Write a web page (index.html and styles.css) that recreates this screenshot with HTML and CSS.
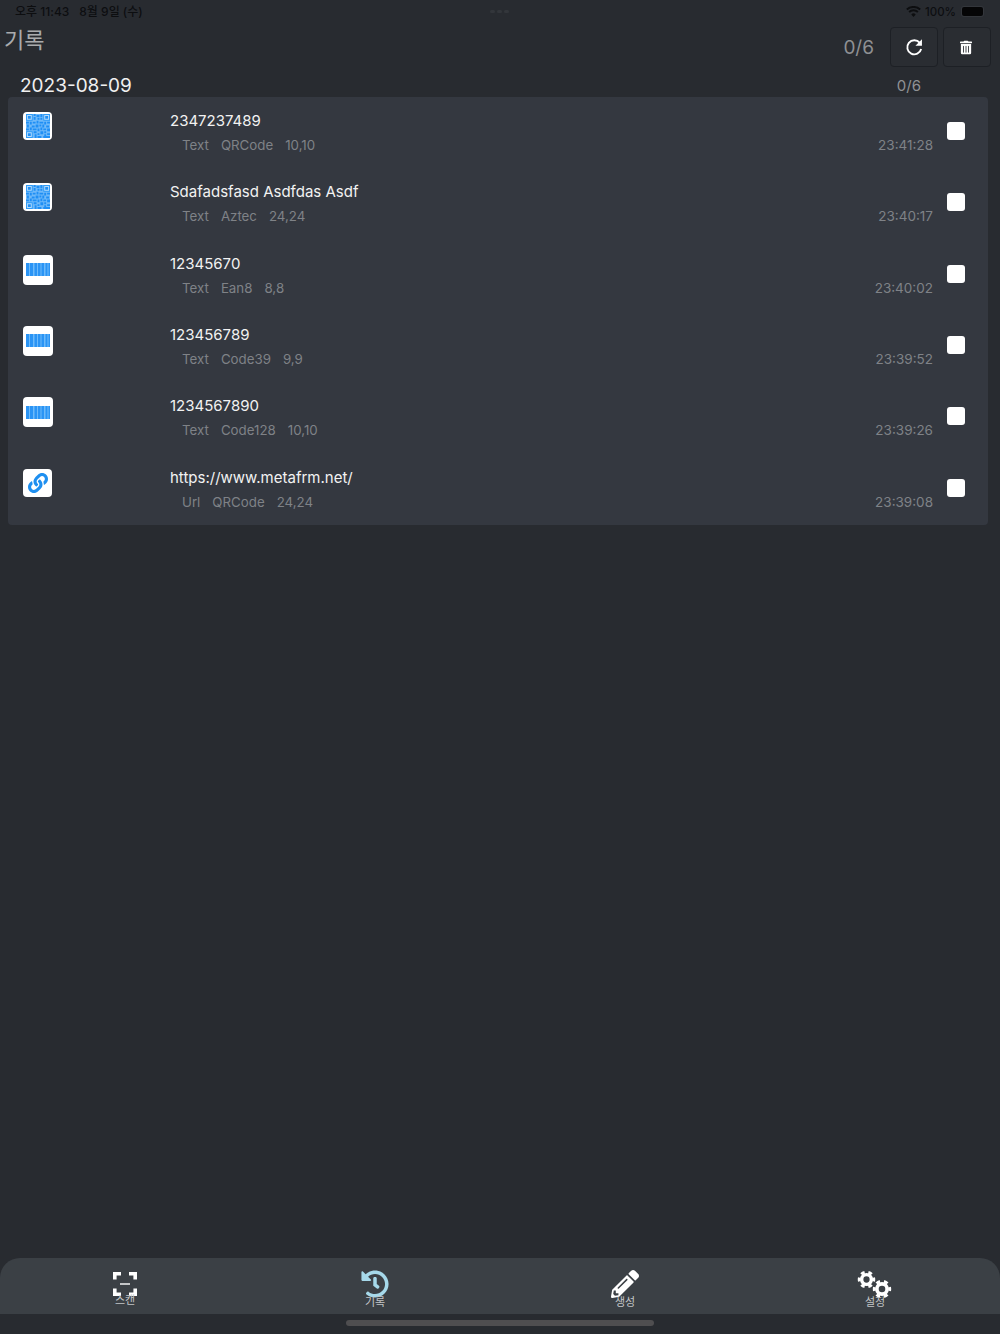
FILE: index.html
```html
<!DOCTYPE html>
<html lang="ko">
  <head>
    <meta charset="UTF-8" />
    <meta name="viewport" content="width=device-width, initial-scale=1.0" />
    <title>기록</title>
    <link rel="stylesheet" href="styles.css">
  </head>
  <body>
    <svg class="defs" width="0" height="0" aria-hidden="true">
      <symbol id="ic-qr" viewBox="0 0 25 25">
        <rect width="25" height="25" fill="#6fb9f9"/>
        <path fill="#2f9bf7" d="M0 0h7v7H0zM18 0h7v7h-7zM0 18h7v7H0z"/>
        <path fill="#b5dbfc" d="M1 1h5v5H1zM19 1h5v5h-5zM1 19h5v5H1z"/>
        <path fill="#1f8ff5" d="M2 2h3v3H2zM20 2h3v3h-3zM2 20h3v3H2zM8 0h2v2H8zM11 1h3v2h-3zM15 0h2v3h-2zM8 3h2v3H8zM12 4h2v2h-2zM15 4h2v2h-2zM0 8h3v2H0zM4 8h2v3H4zM7 8h3v2H7zM11 7h2v3h-2zM14 8h4v2h-4zM19 8h2v3h-2zM22 8h3v2h-3zM1 11h2v3H1zM6 12h3v2H6zM10 11h3v3h-3zM14 11h2v2h-2zM17 11h2v3h-2zM21 12h3v2h-3zM0 15h3v2H0zM4 14h2v3H4zM7 15h4v2H7zM12 15h2v3h-2zM15 14h2v3h-2zM18 15h3v2h-3zM22 15h3v3h-3zM8 18h3v2H8zM15 18h3v3h-3zM19 18h2v2h-2zM9 21h2v4H9zM12 20h2v2h-2zM12 23h4v2h-4zM19 21h2v2h-2zM22 20h3v2h-3zM18 23h7v2h-7z"/>
      </symbol>
      <symbol id="ic-barcode" viewBox="0 0 24 13">
        <rect width="24" height="13" fill="#2a94f5"/>
        <path fill="#6dbafa" d="M3 0h1v13H3zM7 0h1.500v13H7zM11 0h1v13h-1zM14.500 0h1v13h-1zM18 0h1.500v13H18zM21.500 0h1v13h-1z"/>
      </symbol>
      <symbol id="ic-link" viewBox="0 0 512 512">
        <path fill="#1e8ff0" d="M326.612 185.391c59.747 59.809 58.927 155.698.36 214.59-.11.12-.24.25-.36.37l-67.2 67.2c-59.27 59.27-155.699 59.262-214.96 0-59.27-59.26-59.27-155.7 0-214.96l37.106-37.106c9.84-9.84 26.786-3.3 27.294 10.606.648 17.722 3.826 35.527 9.69 52.721 1.986 5.822.567 12.262-3.783 16.612l-13.087 13.087c-28.026 28.026-28.905 73.66-1.155 101.96 28.024 28.579 74.086 28.749 102.325.51l67.2-67.19c28.191-28.191 28.073-73.757 0-101.83-3.701-3.694-7.429-6.564-10.341-8.569a16.037 16.037 0 0 1-6.947-12.606c-.396-10.567 3.348-21.456 11.698-29.806l21.054-21.055c5.521-5.521 14.182-6.199 20.584-1.731a152.482 152.482 0 0 1 20.522 17.197zM467.547 44.449c-59.261-59.262-155.69-59.27-214.96 0l-67.2 67.2c-.12.12-.25.25-.36.37-58.566 58.892-59.387 154.781.36 214.59a152.454 152.454 0 0 0 20.521 17.196c6.402 4.468 15.064 3.789 20.584-1.731l21.054-21.055c8.35-8.35 12.094-19.239 11.698-29.806a16.037 16.037 0 0 0-6.947-12.606c-2.912-2.005-6.64-4.875-10.341-8.569-28.073-28.073-28.191-73.639 0-101.83l67.2-67.19c28.239-28.239 74.3-28.069 102.325.51 27.75 28.3 26.872 73.934-1.155 101.96l-13.087 13.087c-4.35 4.35-5.769 10.79-3.783 16.612 5.864 17.194 9.042 34.999 9.69 52.721.509 13.906 17.454 20.446 27.294 10.606l37.106-37.106c59.271-59.259 59.271-155.699.001-214.959z"/>
      </symbol>
      <symbol id="ic-gear" viewBox="0 0 20 20">
        <circle cx="10" cy="10" r="5.100" fill="none" stroke="#fff" stroke-width="3.600"/>
        <circle cx="10" cy="10" r="7.700" fill="none" stroke="#fff" stroke-width="3" pathLength="12" stroke-dasharray="1 1" stroke-dashoffset=".5"/>
      </symbol>
    </svg>

    <div class="status-bar">
      <span class="status-time"><span>오후 11:43</span><span>8월 9일 (수)</span></span>
      <span class="status-dots"><i></i><i></i><i></i></span>
      <span class="status-right">
        <svg class="wifi" viewBox="0 0 16 12" width="15" height="11">
          <path fill="#0d0e10" d="M8 12 5.600 9.200a3.400 3.400 0 0 1 4.800 0zM3.900 7.400 2.500 5.800a8 8 0 0 1 11 0l-1.400 1.600a5.800 5.800 0 0 0-8.200 0zM1.400 4.600 0 3a12 12 0 0 1 16 0l-1.400 1.600a9.900 9.900 0 0 0-13.200 0z"/>
        </svg>
        <span>100%</span>
        <span class="battery"><span class="battery-fill"></span></span>
      </span>
    </div>

    <header class="top-bar">
      <h1 class="page-title">기록</h1>
      <div class="top-actions">
        <span class="top-count">0/6</span>
        <button class="icon-btn">
          <svg viewBox="0 0 20 20" width="19" height="19">
            <path fill="none" stroke="#fff" stroke-width="2" d="M15.600 5.200A7.400 7.400 0 1 0 17 11.600"/>
            <path fill="#fff" d="M17.800 1.400v6.800H11z"/>
          </svg>
        </button>
        <button class="icon-btn icon-btn-trash">
          <svg viewBox="0 0 448 512" width="12" height="15">
            <path fill="#fff" d="M32 464a48 48 0 0 0 48 48h288a48 48 0 0 0 48-48V128H32zm272-256a16 16 0 0 1 32 0v224a16 16 0 0 1-32 0zm-96 0a16 16 0 0 1 32 0v224a16 16 0 0 1-32 0zm-96 0a16 16 0 0 1 32 0v224a16 16 0 0 1-32 0zM432 32H312l-9.400-18.700A24 24 0 0 0 281.100 0H166.800a23.720 23.720 0 0 0-21.400 13.300L136 32H16A16 16 0 0 0 0 48v32a16 16 0 0 0 16 16h416a16 16 0 0 0 16-16V48a16 16 0 0 0-16-16z"/>
          </svg>
        </button>
      </div>
    </header>

    <main class="content">
      <div class="group-head">
        <span class="group-date">2023-08-09</span>
        <span class="group-count">0/6</span>
      </div>
      <section class="card">
        <div class="row">
          <span class="thumb"><svg class="thumb-qr"><use href="#ic-qr"/></svg></span>
          <div class="row-body">
            <div class="row-title">2347237489</div>
            <div class="row-meta"><span>Text</span><span>QRCode</span><span>10,10</span></div>
          </div>
          <span class="row-time">23:41:28</span>
          <span class="check"></span>
        </div>
        <div class="row">
          <span class="thumb"><svg class="thumb-qr"><use href="#ic-qr"/></svg></span>
          <div class="row-body">
            <div class="row-title">Sdafadsfasd Asdfdas Asdf</div>
            <div class="row-meta"><span>Text</span><span>Aztec</span><span>24,24</span></div>
          </div>
          <span class="row-time">23:40:17</span>
          <span class="check"></span>
        </div>
        <div class="row">
          <span class="thumb thumb-low"><svg class="thumb-bar"><use href="#ic-barcode"/></svg></span>
          <div class="row-body">
            <div class="row-title">12345670</div>
            <div class="row-meta"><span>Text</span><span>Ean8</span><span>8,8</span></div>
          </div>
          <span class="row-time">23:40:02</span>
          <span class="check"></span>
        </div>
        <div class="row">
          <span class="thumb thumb-low"><svg class="thumb-bar"><use href="#ic-barcode"/></svg></span>
          <div class="row-body">
            <div class="row-title">123456789</div>
            <div class="row-meta"><span>Text</span><span>Code39</span><span>9,9</span></div>
          </div>
          <span class="row-time">23:39:52</span>
          <span class="check"></span>
        </div>
        <div class="row">
          <span class="thumb thumb-low"><svg class="thumb-bar"><use href="#ic-barcode"/></svg></span>
          <div class="row-body">
            <div class="row-title">1234567890</div>
            <div class="row-meta"><span>Text</span><span>Code128</span><span>10,10</span></div>
          </div>
          <span class="row-time">23:39:26</span>
          <span class="check"></span>
        </div>
        <div class="row">
          <span class="thumb"><svg class="thumb-link"><use href="#ic-link"/></svg></span>
          <div class="row-body">
            <div class="row-title">https://www.metafrm.net/</div>
            <div class="row-meta"><span>Url</span><span>QRCode</span><span>24,24</span></div>
          </div>
          <span class="row-time">23:39:08</span>
          <span class="check"></span>
        </div>
      </section>
    </main>

    <nav class="tab-bar">
      <div class="tab">
        <svg class="tab-icon" viewBox="0 0 26 26" width="26" height="26">
          <path fill="none" stroke="#fff" stroke-width="3.600" d="M2.800 8.500V2.800H9M17 2.800h6.200v5.700M23.200 17.500v5.700H17M9 23.200H2.800v-5.700"/>
          <path fill="#fff" d="M8 12.300h10v1.400H8z"/>
        </svg>
        <span class="tab-label">스캔</span>
      </div>
      <div class="tab">
        <svg class="tab-icon" viewBox="0 0 512 512" width="28" height="28">
          <path fill="#a6d9ea" d="M504 255.531c.253 136.64-111.18 248.372-247.82 248.468-59.015.042-113.223-20.53-155.822-54.911-11.077-8.94-11.905-25.541-1.839-35.607l11.267-11.267c8.609-8.609 22.353-9.551 31.891-1.984C173.062 425.135 212.781 440 256 440c101.705 0 184-82.311 184-184 0-101.705-82.311-184-184-184-48.814 0-93.149 18.969-126.068 49.932l50.754 50.754c10.08 10.08 2.941 27.314-11.313 27.314H24c-8.837 0-16-7.163-16-16V38.627c0-14.254 17.234-21.393 27.314-11.314l49.372 49.372C129.209 34.136 189.552 8 256 8c136.81 0 247.747 110.78 248 247.531zm-180.912 78.784l9.823-12.63c8.138-10.463 6.253-25.542-4.21-33.679L288 256.349V152c0-13.255-10.745-24-24-24h-16c-13.255 0-24 10.745-24 24v135.651l65.409 50.874c10.463 8.137 25.541 6.253 33.679-4.21z"/>
        </svg>
        <span class="tab-label">기록</span>
      </div>
      <div class="tab">
        <svg class="tab-icon" viewBox="0 0 512 512" width="28" height="28">
          <path fill="#fff" d="M497.900 142.100l-46.100 46.100c-4.700 4.700-12.300 4.700-17 0l-111-111c-4.700-4.700-4.700-12.300 0-17l46.100-46.100c18.700-18.700 49.100-18.700 67.900 0l60.100 60.100c18.800 18.700 18.800 49.100 0 67.900zM284.200 99.800L21.600 362.400.4 483.900c-2.900 16.400 11.400 30.600 27.800 27.800l121.500-21.300 262.600-262.600c4.700-4.700 4.700-12.300 0-17l-111-111c-4.800-4.700-12.400-4.700-17.100 0zM124.100 339.900c-5.500-5.500-5.500-14.300 0-19.800l154-154c5.500-5.500 14.300-5.500 19.800 0s5.500 14.300 0 19.800l-154 154c-5.500 5.500-14.300 5.500-19.800 0zM88 424h48v36.300l-64.500 11.300-31.100-31.100L51.700 376H88v48z"/>
        </svg>
        <span class="tab-label">생성</span>
      </div>
      <div class="tab">
        <svg class="tab-icon" viewBox="0 0 36 28" width="36" height="28">
          <use href="#ic-gear" x="0" y="0" width="19" height="19"/>
          <use href="#ic-gear" x="15" y="9" width="20" height="20"/>
        </svg>
        <span class="tab-label">설정</span>
      </div>
    </nav>
    <div class="home-area"><span class="home-bar"></span></div>
  </body>
</html>
```

FILE: styles.css
```css
* {
  box-sizing: border-box;
  margin: 0;
  padding: 0;
}
html,
body {
  height: 100%;
}
body {
  display: flex;
  flex-direction: column;
  height: 1334px;
  overflow: hidden;
  background-color: #282b30;
  font-family: Inter, "Noto Sans CJK KR", sans-serif;
  color: #fff;
}
.defs {
  position: absolute;
}
.status-bar {
  display: flex;
  align-items: center;
  height: 22px;
  padding: 0 16px 0 15px;
  font-size: 12px;
  font-weight: 500;
  color: #0d0e10;
}
.status-time,
.status-right {
  display: flex;
  flex: 1;
}
.status-time {
  gap: 10px;
  margin-top: -1px;
}
.status-dots {
  display: flex;
  gap: 2px;
}
.status-dots i {
  width: 5px;
  height: 3px;
  border-radius: 2px;
  background-color: #33363b;
}
.status-right {
  align-items: center;
  justify-content: flex-end;
  gap: 4px;
  margin-top: 1px;
  font-size: 11.5px;
}
.battery {
  display: block;
  width: 23px;
  height: 11px;
  margin-left: 1px;
  padding: 1px;
  border-radius: 3px;
  background-color: #33363b;
}
.battery-fill {
  display: block;
  width: 100%;
  height: 100%;
  border-radius: 2px;
  background-color: #050506;
}
.top-bar {
  display: flex;
  justify-content: space-between;
  height: 45px;
  padding: 5px 9px 0 4px;
}
.page-title {
  font-size: 22px;
  font-weight: 400;
  line-height: 26px;
  color: #a9abad;
}
.top-actions {
  display: flex;
  align-items: center;
  align-self: flex-start;
  gap: 5px;
}
.top-count {
  margin-right: 11px;
  font-size: 19px;
  color: #8e9093;
}
.icon-btn {
  display: flex;
  align-items: center;
  justify-content: center;
  width: 48px;
  height: 40px;
  border: 1px solid #1d2025;
  border-radius: 4px;
  background-color: #2a2d32;
}
.icon-btn-trash {
  padding-right: 2px;
}
.content {
  flex: 1;
  padding: 0 12px 0 8px;
}
.group-head {
  display: flex;
  justify-content: space-between;
  height: 30px;
  padding: 7px 67px 0 12px;
}
.group-date {
  font-size: 19px;
  line-height: 24px;
  color: #f0f0f0;
}
.group-count {
  font-size: 15px;
  line-height: 24px;
  color: #909295;
}
.card {
  border-radius: 4px;
  background-color: #343840;
}
.row {
  display: flex;
  align-items: flex-start;
  height: 71.33px;
  padding-left: 15px;
}
.thumb {
  display: flex;
  align-items: center;
  justify-content: center;
  flex-shrink: 0;
  width: 29px;
  height: 28px;
  margin-top: 15px;
  border-radius: 4px;
  background-color: #fff;
}
.thumb-low {
  width: 30px;
  height: 30px;
}
.thumb-qr {
  width: 24px;
  height: 24px;
  filter: blur(0.4px);
}
.thumb-bar {
  width: 24px;
  height: 13px;
}
.thumb-link {
  width: 20px;
  height: 20px;
}
.row-body {
  flex: 1;
  margin-left: 118px;
  padding-top: 14px;
}
.thumb-low + .row-body {
  margin-left: 117px;
}
.row-title {
  font-size: 15px;
  line-height: 20px;
  color: #f2f2f2;
}
.row-meta {
  display: flex;
  gap: 12px;
  margin-top: 5px;
  padding-left: 12px;
  font-size: 13.3px;
  line-height: 18px;
  color: #7f8287;
}
.row-time {
  margin-top: 39px;
  font-size: 13.5px;
  line-height: 18px;
  color: #7f8287;
}
.check {
  flex-shrink: 0;
  width: 18px;
  height: 18px;
  margin: 25px 23px 0 14px;
  border-radius: 3px;
  background-color: #fff;
}
.tab-bar {
  display: grid;
  grid-template-columns: repeat(4, 1fr);
  height: 56px;
  border-radius: 20px 20px 0 0;
  background-color: #3b4045;
}
.tab {
  display: flex;
  flex-direction: column;
  align-items: center;
  padding-top: 12px;
}
.tab:first-child {
  padding-top: 13px;
}
.tab-icon {
  display: block;
}
.tab-label {
  position: relative;
  margin-top: -3px;
  font-size: 11px;
  line-height: 14px;
  color: #c3c5c7;
}
.tab:first-child .tab-label {
  margin-top: -4px;
}
.home-area {
  display: flex;
  justify-content: center;
  height: 20px;
  padding-top: 6px;
}
.home-bar {
  width: 308px;
  height: 6px;
  border-radius: 3px;
  background-color: #4f4e50;
}
```
